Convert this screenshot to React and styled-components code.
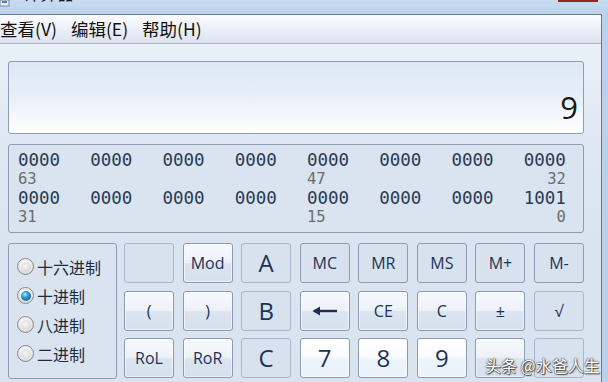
import React from 'react';
import styled, { createGlobalStyle, css } from 'styled-components';

const GlobalStyle = createGlobalStyle`
  html, body {
    margin: 0;
    padding: 0;
    background: #b9d1ea;
  }
  * {
    box-sizing: border-box;
  }
`;

const UI = `"Open Sans", "Noto Sans", "Noto Sans CJK SC", sans-serif`;
const CJK = `"Noto Sans CJK SC", "Noto Sans", sans-serif`;

const Window = styled.div`
  position: relative;
  width: 608px;
  height: 382px;
  overflow: hidden;
  background: #b9d1ea;
  display: flex;
  flex-direction: column;
`;

const TitleBar = styled.div`
  height: 14px;
  flex: none;
  display: flex;
  align-items: flex-end;
  overflow: hidden;
  background: linear-gradient(180deg, #c9dcf0 0%, #bcd3eb 100%);
`;

const TitleIcon = styled.svg`
  width: 10px;
  height: 14px;
  flex: none;
  align-self: flex-start;
`;

const TitleText = styled.span`
  margin-left: 13px;
  margin-bottom: 12px;
  font-family: ${CJK};
  font-size: 17px;
  line-height: 18px;
  color: #1b1b1b;
  height: 18px;
`;

const CloseStrip = styled.div`
  margin-left: auto;
  margin-right: 10px;
  align-self: flex-start;
  width: 40px;
  height: 2px;
  background: #8f2a1c;
`;

const Frame = styled.div`
  flex: 1;
  display: flex;
  min-height: 0;
`;

const Main = styled.div`
  width: 602px;
  display: flex;
  flex-direction: column;
  border-right: 1px solid #6e7a8b;
  min-height: 0;
`;

const MenuBar = styled.div`
  height: 30px;
  flex: none;
  display: flex;
  align-items: center;
  gap: 14px;
  border-top: 1px solid #6f7b8b;
  border-bottom: 1px solid #a9b3c3;
  background: linear-gradient(180deg, #fbfcfe 0%, #eef1f8 45%, #dde3ee 100%);
`;

const MenuItem = styled.span`
  font-family: ${CJK};
  font-size: 17.5px;
  color: #111;
  line-height: 1;
`;

const Body = styled.div`
  flex: 1;
  min-height: 0;
  overflow: hidden;
  padding: 17px 17px 0 8px;
  display: flex;
  flex-direction: column;
  gap: 10px;
  background: linear-gradient(180deg, #eaf0f8 0px, #dfe8f3 90px, #d9e4f0 200px);
`;

const Display = styled.div`
  height: 73px;
  flex: none;
  border: 1px solid #8e9db2;
  border-radius: 3px;
  background: linear-gradient(180deg, #dde8f5 0%, #e6eef8 45%, #ffffff 100%);
  display: flex;
  align-items: flex-end;
  justify-content: flex-end;
  padding: 0 5px 10px 0;
`;

const Value = styled.span`
  font-family: ${UI};
  font-size: 31px;
  line-height: 1;
  color: #1a1a1a;
`;

const BitBox = styled.div`
  height: 89px;
  flex: none;
  border: 1px solid #8e9db2;
  border-radius: 3px;
  background: #d9e4f0;
  padding: 6px 17px 0 9px;
  display: grid;
  grid-template-columns: repeat(8, auto);
  justify-content: space-between;
  grid-auto-rows: 19px;
  align-items: center;
`;

const Bits = styled.span`
  font-family: "DejaVu Sans Mono", "Liberation Mono", monospace;
  font-size: 17.5px;
  line-height: 1;
  color: #2a3a52;
`;

const BitLabel = styled.span`
  font-family: "DejaVu Sans Mono", "Liberation Mono", monospace;
  font-size: 15.5px;
  line-height: 1;
  color: #6c6c6c;
  grid-column: ${(p) => p.$col};
  justify-self: ${(p) => (p.$end ? 'end' : 'start')};
`;

const Keypad = styled.div`
  flex: none;
  display: flex;
  gap: 7px;
`;

const RadioGroup = styled.div`
  width: 109px;
  height: 136px;
  flex: none;
  border: 1px solid #8e9db2;
  border-radius: 3px;
  padding: 8px 0 0 8px;
  display: flex;
  flex-direction: column;
`;

const RadioRow = styled.label`
  height: 29px;
  display: flex;
  align-items: center;
  gap: 3px;
  font-family: ${CJK};
  font-size: 16px;
  color: #1b2b40;
`;

const RadioDot = styled.span`
  width: 17px;
  height: 17px;
  flex: none;
  border-radius: 50%;
  border: 1px solid #8a8a8a;
  background: radial-gradient(circle at 50% 40%, #ffffff 0%, #f0f0f0 45%, #c4c4c4 100%);
  display: flex;
  align-items: center;
  justify-content: center;
  &::after {
    content: '';
    width: 10px;
    height: 10px;
    border-radius: 50%;
    background: ${(p) =>
      p.$on
        ? 'radial-gradient(circle at 40% 35%, #b9f0ff 0%, #2f9ad0 35%, #0b4c79 100%)'
        : 'radial-gradient(circle at 45% 40%, #f6f6f6 0%, #cfcfcf 100%)'};
  }
`;

const Keys = styled.div`
  flex: 1;
  display: grid;
  grid-template-columns: repeat(8, 1fr);
  grid-auto-rows: 40px;
  column-gap: 8.5px;
  row-gap: 7.5px;
`;

const variants = {
  std: css`
    border-color: #8a9ab1;
    background: linear-gradient(180deg, #f7f9fc 0%, #edf2f8 48%, #dbe4f0 52%, #d7e1ee 100%);
    box-shadow: inset 0 0 0 1px rgba(255, 255, 255, 0.55);
  `,
  num: css`
    border-color: #8a9ab1;
    background: linear-gradient(180deg, #ffffff 0%, #f9fbfe 48%, #eef4fb 52%, #eaf1fa 100%);
    box-shadow: inset 0 0 0 1px rgba(255, 255, 255, 0.7);
  `,
  mem: css`
    border-color: #8d9cb3;
    background: #d8e2ef;
  `,
  off: css`
    border-color: #a9b7cb;
    background: #d8e2ee;
  `,
};

const Key = styled.div`
  border: 1px solid;
  border-radius: 3px;
  display: flex;
  align-items: center;
  justify-content: center;
  font-family: ${UI};
  font-size: ${(p) => (p.$big ? '24px' : '16px')};
  color: #1c3358;
  line-height: 1;
  ${(p) => variants[p.$kind || 'std']}
`;

const Arrow = styled.svg`
  width: 26px;
  height: 12px;
`;

const Watermark = styled.div`
  position: absolute;
  left: 485px;
  top: 353px;
  font-family: ${CJK};
  font-size: 16px;
  color: #ffffff;
  text-shadow: 0 0 1px #333, 0 0 2px #444, 1px 1px 1px #555;
`;

const rows = [
  ['0000', '0000', '0000', '0000', '0000', '0000', '0000', '0000'],
  ['0000', '0000', '0000', '0000', '0000', '0000', '0000', '1001'],
];
const labels = [
  ['63', '47', '32'],
  ['31', '15', '0'],
];

const keys = [
  { t: '', k: 'off' },
  { t: 'Mod' },
  { t: 'A', k: 'off', big: true },
  { t: 'MC', k: 'mem' },
  { t: 'MR', k: 'mem' },
  { t: 'MS', k: 'mem' },
  { t: 'M+', k: 'mem' },
  { t: 'M-', k: 'mem' },
  { t: '(' },
  { t: ')' },
  { t: 'B', k: 'off', big: true },
  { t: 'back' },
  { t: 'CE' },
  { t: 'C' },
  { t: '±' },
  { t: '√', k: 'off' },
  { t: 'RoL' },
  { t: 'RoR' },
  { t: 'C', k: 'off', big: true },
  { t: '7', k: 'num', big: true },
  { t: '8', k: 'num', big: true },
  { t: '9', k: 'num', big: true },
  { t: '', k: 'std' },
  { t: '', k: 'off' },
];

const radios = ['十六进制', '十进制', '八进制', '二进制'];

export default function App() {
  return (
    <>
      <GlobalStyle />
      <Window>
        <TitleBar>
          <TitleIcon viewBox="0 0 10 14">
            <rect x="0" y="0" width="9" height="6" fill="#e8eef5" stroke="#7b8694" />
            <rect x="2" y="1" width="5" height="2" fill="#4a7fc0" />
          </TitleIcon>
          <TitleText>计算器</TitleText>
          <CloseStrip />
        </TitleBar>
        <Frame>
          <Main>
            <MenuBar>
              <MenuItem>查看(V)</MenuItem>
              <MenuItem>编辑(E)</MenuItem>
              <MenuItem>帮助(H)</MenuItem>
            </MenuBar>
            <Body>
              <Display>
                <Value>9</Value>
              </Display>
              <BitBox>
                {rows.map((r, i) => (
                  <React.Fragment key={i}>
                    {r.map((b, j) => (
                      <Bits key={j}>{b}</Bits>
                    ))}
                    <BitLabel $col={1}>{labels[i][0]}</BitLabel>
                    <BitLabel $col={5}>{labels[i][1]}</BitLabel>
                    <BitLabel $col={8} $end>
                      {labels[i][2]}
                    </BitLabel>
                  </React.Fragment>
                ))}
              </BitBox>
              <Keypad>
                <RadioGroup>
                  {radios.map((r, i) => (
                    <RadioRow key={r}>
                      <RadioDot $on={i === 1} />
                      {r}
                    </RadioRow>
                  ))}
                </RadioGroup>
                <Keys>
                  {keys.map((k, i) => (
                    <Key key={i} $kind={k.k} $big={k.big}>
                      {k.t === 'back' ? (
                        <Arrow viewBox="0 0 26 12">
                          <path d="M2 6 H25" stroke="#1c2f4f" strokeWidth="2.4" />
                          <path d="M0.5 6 L8 1.5 L8 10.5 Z" fill="#1c2f4f" />
                        </Arrow>
                      ) : (
                        k.t
                      )}
                    </Key>
                  ))}
                </Keys>
              </Keypad>
            </Body>
          </Main>
        </Frame>
        <Watermark>头条 @水爸人生</Watermark>
      </Window>
    </>
  );
}
